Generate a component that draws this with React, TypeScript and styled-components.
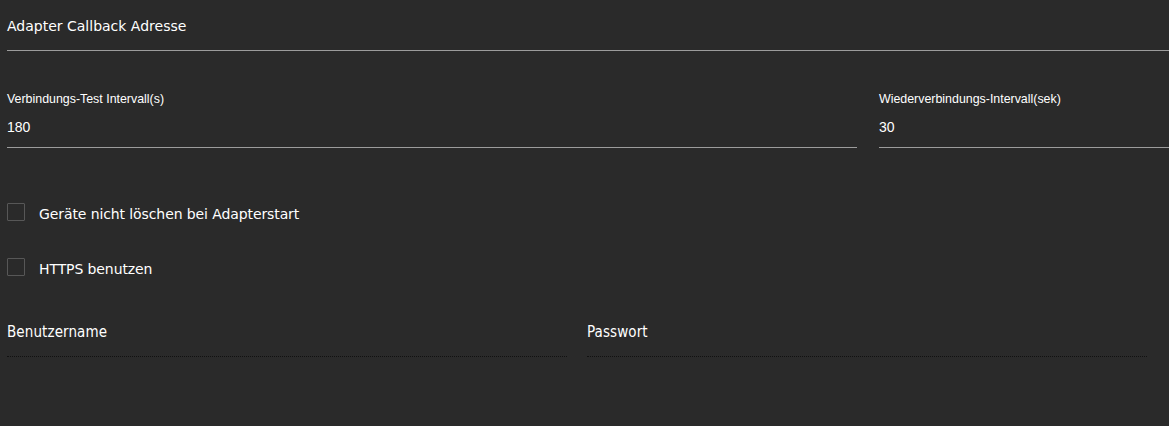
import React from "react";
import styled, { createGlobalStyle } from "styled-components";

const Global = createGlobalStyle`
  html, body { margin: 0; padding: 0; background: #2a2a2a; }
  body { font-family: "DejaVu Sans", sans-serif; color: #ffffff; }
`;

const Page = styled.div`
  width: 1169px;
  height: 426px;
  box-sizing: border-box;
  padding-left: 7px;
  background: #2a2a2a;
  display: flex;
  flex-direction: column;
  overflow: hidden;
`;

const TitleField = styled.div`
  padding: 18px 0 16px;
  border-bottom: 1px solid #9c9c9c;
  font-family: "DejaVu Sans", sans-serif;
  font-size: 14px;
  line-height: 16px;
  color: #ffffff;
`;

const FieldRow = styled.div<{ $cols: string; $gap: number; $top: number }>`
  display: grid;
  grid-template-columns: ${(p) => p.$cols};
  column-gap: ${(p) => p.$gap}px;
  margin-top: ${(p) => p.$top}px;
`;

const TextField = styled.div`
  display: flex;
  flex-direction: column;
  border-bottom: 1px solid #9c9c9c;
  padding-bottom: 12px;
`;

const SmallLabel = styled.div`
  font-family: "Liberation Sans", Arial, sans-serif;
  font-size: 12.4px;
  line-height: 14px;
  color: #ffffff;
`;

const Value = styled.div`
  margin-top: 13px;
  font-family: "Liberation Sans", Arial, sans-serif;
  font-size: 14px;
  line-height: 16px;
  color: #ffffff;
`;

const CheckList = styled.div`
  display: flex;
  flex-direction: column;
  gap: 37px;
  margin-top: 55px;
`;

const CheckRow = styled.label`
  display: flex;
  align-items: flex-start;
  gap: 14px;
  height: 18px;
`;

const Box = styled.span`
  width: 18px;
  height: 18px;
  box-sizing: border-box;
  border: 1px solid #575757;
  border-radius: 1px;
  flex: none;
`;

const CheckText = styled.span`
  font-family: "DejaVu Sans", sans-serif;
  font-size: 14px;
  letter-spacing: -0.1px;
  line-height: 16px;
  padding-top: 3px;
  color: #ffffff;
`;

const DottedField = styled.div`
  padding-bottom: 15px;
  border-bottom: 1px dotted #111111;
  font-family: "DejaVu Sans Condensed", "DejaVu Sans", sans-serif;
  font-stretch: condensed;
  font-size: 15px;
  line-height: 18px;
  letter-spacing: 0.1px;
  color: #ffffff;
`;

export default function App() {
  return (
    <>
      <Global />
      <Page>
        <TitleField>Adapter Callback Adresse</TitleField>
        <FieldRow $cols="850px 1fr" $gap={22} $top={41}>
          <TextField>
            <SmallLabel>Verbindungs-Test Intervall(s)</SmallLabel>
            <Value>180</Value>
          </TextField>
          <TextField>
            <SmallLabel>Wiederverbindungs-Intervall(sek)</SmallLabel>
            <Value>30</Value>
          </TextField>
        </FieldRow>
        <CheckList>
          <CheckRow>
            <Box />
            <CheckText>Geräte nicht löschen bei Adapterstart</CheckText>
          </CheckRow>
          <CheckRow>
            <Box />
            <CheckText>HTTPS benutzen</CheckText>
          </CheckRow>
        </CheckList>
        <FieldRow $cols="560px 560px" $gap={20} $top={47}>
          <DottedField>Benutzername</DottedField>
          <DottedField>Passwort</DottedField>
        </FieldRow>
      </Page>
    </>
  );
}
